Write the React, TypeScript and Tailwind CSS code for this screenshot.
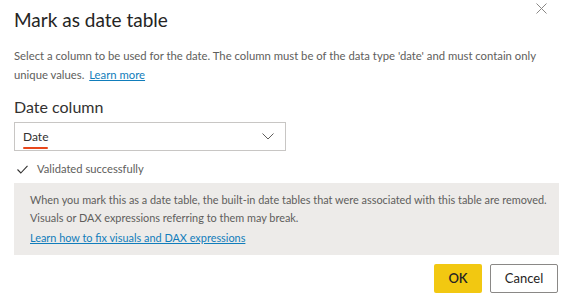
import React from "react";

function CloseIcon() {
  return (
    <svg width="11" height="11" viewBox="0 0 11 11" fill="none">
      <path d="M0.5 0.5L10.5 10.5M10.5 0.5L0.5 10.5" stroke="#8a8886" strokeWidth="1" />
    </svg>
  );
}

function Chevron() {
  return (
    <svg width="12" height="7" viewBox="0 0 12 7" fill="none">
      <path d="M0.5 0.5L6 6L11.5 0.5" stroke="#605e5c" strokeWidth="1" />
    </svg>
  );
}

function Check() {
  return (
    <svg width="11" height="9" viewBox="0 0 11 9" fill="none">
      <path d="M0.5 4.5L3.8 8L10.5 0.8" stroke="#323130" strokeWidth="1.1" />
    </svg>
  );
}

export default function App() {
  return (
    <div className="relative w-[576px] h-[305px] bg-white px-[14px] font-['Lato',sans-serif] text-[#323130]">
      <button className="absolute right-[29px] top-[3px] w-[11px] h-[11px] flex items-center justify-center">
        <CloseIcon />
      </button>

      <h1 className="pt-[8px] text-[19px] leading-[24px] text-[#252423]">Mark as date table</h1>

      <p className="mt-[14px] text-[11.3px] leading-[19px] text-[#605e5c] whitespace-nowrap">
        Select a column to be used for the date. The column must be of the data type 'date' and must contain only
        <br />
        unique values.{" "}
        <a className="text-[#117dbb] underline ml-[2px]" href="#">
          Learn more
        </a>
      </p>

      <div className="mt-[13px] text-[16px] leading-[20px] text-[#323130]">Date column</div>

      <div className="mt-[5px] w-[272px] h-[29px] border border-[#c8c6c4] flex items-center justify-between pl-[8px] pr-[11px]">
        <span className="relative text-[12px] text-[#323130]">
          Date
          <span className="absolute left-0 right-0 -bottom-[3px] h-[2px] bg-[#e8471b] rounded-full" />
        </span>
        <Chevron />
      </div>

      <div className="mt-[9px] flex items-center gap-[9px] pl-[3px] text-[11.2px] leading-[18px] text-[#605e5c]">
        <Check />
        <span>Validated successfully</span>
      </div>

      <div className="mt-[5px] w-[545px] bg-[#edebe9] px-[16px] pt-[8px] pb-[8px] text-[10.9px] leading-[18px] text-[#605e5c] whitespace-nowrap">
        <p>When you mark this as a date table, the built-in date tables that were associated with this table are removed.</p>
        <p>Visuals or DAX expressions referring to them may break.</p>
        <a className="block mt-[2px] text-[#117dbb] underline" href="#">
          Learn how to fix visuals and DAX expressions
        </a>
      </div>

      <div className="mt-[9px] flex justify-end gap-[8px] pr-[4px]">
        <button className="w-[48px] h-[29px] bg-[#f2c811] rounded-[2px] text-[13px] font-semibold text-[#252423]">OK</button>
        <button className="w-[68px] h-[29px] bg-white border border-[#8a8886] rounded-[2px] text-[13px] text-[#252423]">
          Cancel
        </button>
      </div>
    </div>
  );
}
